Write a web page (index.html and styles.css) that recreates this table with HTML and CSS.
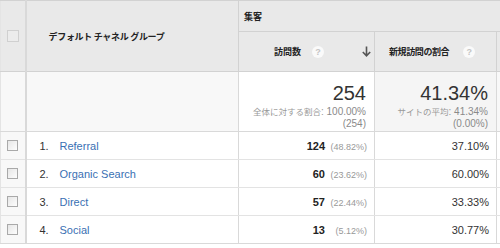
FILE: index.html
```html
<!DOCTYPE html>
<html lang="ja">
<head>
<meta charset="utf-8">
<link rel="stylesheet" href="styles.css">
</head>
<body>
<table class="report">
  <colgroup>
    <col class="c-check">
    <col class="c-name">
    <col class="c-visits">
    <col class="c-new">
    <col class="c-extra">
  </colgroup>
  <thead>
    <tr class="h1">
      <th class="chk" rowspan="2"><span class="box empty"></span></th>
      <th class="dim" rowspan="2">デフォルト チャネル グループ</th>
      <th class="group" colspan="3">集客</th>
    </tr>
    <tr class="h2">
      <th class="metric m1">
        <div class="mhead">
          <span class="mlabel">訪問数</span>
          <span class="help">?</span>
          <svg class="arrow" width="9" height="11" viewBox="0 0 9 11"><path d="M4.5 0.5v9M0.8 6l3.7 3.8L8.2 6" fill="none" stroke="#555" stroke-width="1.6"/></svg>
        </div>
      </th>
      <th class="metric m2">
        <div class="mhead">
          <span class="mlabel">新規訪問の割合</span>
          <span class="help">?</span>
        </div>
      </th>
      <th class="extra"></th>
    </tr>
  </thead>
  <tbody>
    <tr class="summary">
      <td class="chk"></td>
      <td class="name"></td>
      <td class="sum sorted">
        <div class="big">254</div>
        <div class="sub"><span class="cjk">全体に対する割合</span>: <span class="lt">100.00%</span></div>
        <div class="sub lt">(254)</div>
      </td>
      <td class="sum shade">
        <div class="big">41.34%</div>
        <div class="sub"><span class="cjk">サイトの平均</span>: <span class="lt">41.34%</span></div>
        <div class="sub lt">(0.00%)</div>
      </td>
      <td class="extra"></td>
    </tr>
    <tr class="row">
      <td class="chk"><span class="box"></span></td>
      <td class="name"><span class="idx">1.</span><a class="lnk">Referral</a></td>
      <td class="num"><b>124</b><span class="pct">(48.82%)</span></td>
      <td class="num">37.10%</td>
      <td class="extra"></td>
    </tr>
    <tr class="row">
      <td class="chk"><span class="box"></span></td>
      <td class="name"><span class="idx">2.</span><a class="lnk">Organic Search</a></td>
      <td class="num"><b>60</b><span class="pct">(23.62%)</span></td>
      <td class="num">60.00%</td>
      <td class="extra"></td>
    </tr>
    <tr class="row">
      <td class="chk"><span class="box"></span></td>
      <td class="name"><span class="idx">3.</span><a class="lnk">Direct</a></td>
      <td class="num"><b>57</b><span class="pct">(22.44%)</span></td>
      <td class="num">33.33%</td>
      <td class="extra"></td>
    </tr>
    <tr class="row">
      <td class="chk"><span class="box"></span></td>
      <td class="name"><span class="idx">4.</span><a class="lnk">Social</a></td>
      <td class="num"><b>13</b><span class="pct">(5.12%)</span></td>
      <td class="num">30.77%</td>
      <td class="extra"></td>
    </tr>
  </tbody>
</table>
</body>
</html>
```

FILE: styles.css
```css
html, body {
  margin: 0;
  padding: 0;
  background: #fff;
}
body {
  font-family: "Liberation Sans", Arial, "Noto Sans CJK JP", sans-serif;
  color: #222;
  width: 500px;
  height: 248px;
  overflow: hidden;
}
.report {
  border-collapse: collapse;
  table-layout: fixed;
  width: 501px;
}
.c-check { width: 25px; }
.c-name { width: 213px; }
.c-visits { width: 136px; }
.c-new { width: 122px; }
.c-extra { width: 5px; }

.report th, .report td {
  padding: 0;
  border: 1px solid #d9d9d9;
}
.report thead th {
  background: #e9e9e9;
  border-color: #d2d2d2;
  font-family: "Noto Sans CJK JP", sans-serif;
  font-weight: 700;
  font-size: 9px;
  color: #222;
}
.h1 { height: 31px; }
.h1 th { border-top-color: #dcdcdc; }
.h2 { height: 40px; }
.chk {
  text-align: center;
  vertical-align: middle;
}
.report th.chk, .report td.chk {
  border-left-color: #e4e4e4;
  border-right: 2px solid #d9d9d9;
}
.box {
  display: block;
  width: 9px;
  height: 9px;
  margin: 0 auto;
  border: 1px solid #a9a9a9;
  background: linear-gradient(135deg, #e6e6e6, #fdfdfd);
  box-sizing: content-box;
}
.box.empty {
  width: 10px;
  height: 10px;
  border-color: #d0d0d0;
  background: #ececec;
}
.report th.dim {
  text-align: left;
  padding-left: 22px;
  letter-spacing: -0.3px;
  vertical-align: middle;
}
.report th.group {
  text-align: left;
  padding-left: 5px;
  vertical-align: middle;
}
.metric { vertical-align: middle; }
.mhead {
  display: flex;
  align-items: center;
}
.m1 .mhead {
  justify-content: flex-end;
  padding-right: 3px;
}
.m2 .mhead {
  justify-content: flex-start;
  padding-left: 14px;
}
.m2 .mlabel { letter-spacing: -0.4px; }
.help {
  display: inline-block;
  width: 12px;
  height: 12px;
  border-radius: 50%;
  background: #fafafa;
  color: #c4c4c4;
  font-family: "Liberation Sans", Arial, sans-serif;
  font-size: 9px;
  font-weight: 700;
  line-height: 12px;
  text-align: center;
  margin-left: 11px;
}
.m2 .help { margin-left: 14px; }
.arrow { margin-left: 38px; }
.report thead th.extra { border-right: none; }
.report td.extra { border-right: none; }

.summary { height: 60px; }
.summary td { background: #f8f8f8; }
.report .summary td.sorted { background: #fff; }
.report .summary td.shade { background: #f5f5f5; }
.report td.sum {
  text-align: right;
  vertical-align: top;
  padding: 10px 8px 0 0;
}
.big {
  font-size: 20px;
  line-height: 22px;
  color: #333;
}
.sub {
  font-size: 10px;
  line-height: 12px;
  color: #999;
  margin-top: 1px;
}
.sub + .sub { margin-top: 0; }
.cjk {
  font-family: "Noto Sans CJK JP", sans-serif;
  font-size: 8.5px;
}
.lt { color: #8a8a8a; }

.row { height: 28px; }
.row td { font-size: 11px; vertical-align: middle; border-color: #e3e3e3; }
.report .row td.chk { background: #f8f8f8; border-right-color: #d9d9d9; }
.report .row td.name, .report .row td.num { border-right-color: #d9d9d9; }
.report td.name { padding-left: 13px; }
.idx {
  display: inline-block;
  width: 20px;
  color: #333;
}
.lnk {
  color: #3a70b3;
  text-decoration: none;
}
.report td.num {
  text-align: right;
  padding-right: 7px;
  color: #333;
}
.num b { color: #222; }
.pct {
  display: inline-block;
  width: 42px;
  text-align: right;
  font-size: 9px;
  color: #999;
}
.report tbody tr:last-child td { border-bottom-color: #d9d9d9; }
```
